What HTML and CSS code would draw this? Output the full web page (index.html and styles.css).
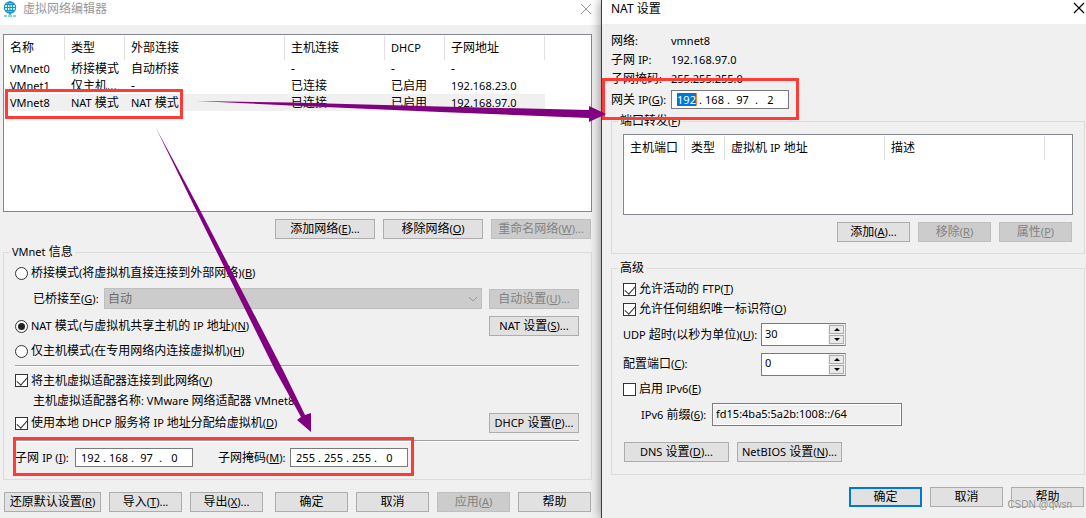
FILE: index.html
```html
<!DOCTYPE html>
<html lang="zh-CN">
<head>
<meta charset="utf-8">
<title>虚拟网络编辑器</title>
<link rel="stylesheet" href="styles.css">
</head>
<body>
<div class="desktop">
  <section class="window editor">
    <header class="titlebar inactive">
      <svg class="globe" viewBox="0 0 14 16" width="14" height="16" fill="none" stroke="#1496c8" stroke-width="1.2"><circle cx="7" cy="6.5" r="5.6"/><ellipse cx="7" cy="6.5" rx="2.6" ry="5.6"/><path d="M7 1v13M1.4 6.5h11.2M2.4 3.5h9.2M2.4 9.5h9.2"/><path d="M1 15h3M5 15h4M10 15h3" stroke="#0fb0a0"/></svg>
      <h1>虚拟网络编辑器</h1>
      <button class="close" aria-label="关闭"><svg viewBox="0 0 12 12" width="12" height="12"><path d="M1 1l10 10M11 1L1 11" stroke="currentColor" fill="none"/></svg></button>
    </header>
    <main class="editor-body">
      <div class="list networks">
        <table>
          <colgroup><col class="c60"><col class="c60"><col class="c160"><col class="c100"><col class="c60"><col class="c100"><col></colgroup>
          <thead><tr><th>名称</th><th>类型</th><th>外部连接</th><th>主机连接</th><th><span class="l">DHCP</span></th><th>子网地址</th><th></th></tr></thead>
          <tbody>
            <tr><td><span class="l">VMnet0</span></td><td>桥接模式</td><td>自动桥接</td><td>-</td><td>-</td><td>-</td><td></td></tr>
            <tr><td><span class="l">VMnet1</span></td><td>仅主机...</td><td>-</td><td>已连接</td><td>已启用</td><td><span class="l">192.168.23.0</span></td><td></td></tr>
            <tr class="selected"><td><span class="l">VMnet8</span></td><td><span class="l">NAT</span> 模式</td><td><span class="l">NAT</span> 模式</td><td>已连接</td><td>已启用</td><td><span class="l">192.168.97.0</span></td><td></td></tr>
          </tbody>
        </table>
      </div>
      <div class="actions network-actions">
        <button class="btn w100">添加网络<span class="l">(<u>E</u>)...</span></button>
        <button class="btn w100">移除网络<span class="l">(<u>O</u>)</span></button>
        <button class="btn w100" disabled>重命名网络<span class="l">(<u>W</u>)...</span></button>
      </div>
      <fieldset>
        <legend><span class="l">VMnet</span> 信息</legend>
        <div class="inner">
          <div class="row h26"><input type="radio" name="mode" id="bridge"><label for="bridge">桥接模式<span class="l">(</span>将虚拟机直接连接到外部网络<span class="l">)(<u>B</u>)</span></label></div>
          <div class="row h25 indent">
            <label for="adapter" class="adapter-label">已桥接至<span class="l">(<u>G</u>):</span></label>
            <div class="combo"><select id="adapter" disabled><option>自动</option></select><svg viewBox="0 0 10 6" width="10" height="6"><path d="M1 1l4 4 4-4" fill="none" stroke="#9a9a9a"/></svg></div>
            <button class="btn w90" disabled>自动设置<span class="l">(<u>U</u>)...</span></button>
          </div>
          <div class="row h30"><input type="radio" name="mode" id="nat" checked><label for="nat"><span class="l">NAT</span> 模式<span class="l">(</span>与虚拟机共享主机的 <span class="l">IP</span> 地址<span class="l">)(<u>N</u>)</span></label><button class="btn w90 end"><span class="l">NAT</span> 设置<span class="l">(<u>S</u>)...</span></button></div>
          <div class="row h20"><input type="radio" name="mode" id="host"><label for="host">仅主机模式<span class="l">(</span>在专用网络内连接虚拟机<span class="l">)(<u>H</u>)</span></label></div>
          <hr class="first">
          <div class="row h27"><input type="checkbox" id="connect" checked><label for="connect">将主机虚拟适配器连接到此网络<span class="l">(<u>V</u>)</span></label></div>
          <p class="adapter-name">主机虚拟适配器名称<span class="l">: VMware </span>网络适配器<span class="l"> VMnet8</span></p>
          <div class="row h32"><input type="checkbox" id="dhcp" checked><label for="dhcp">使用本地<span class="l"> DHCP </span>服务将<span class="l"> IP </span>地址分配给虚拟机<span class="l">(<u>D</u>)</span></label><button class="btn w90 end"><span class="l">DHCP</span> 设置<span class="l">(<u>P</u>)...</span></button></div>
          <hr>
          <div class="row h31">
            <label for="sub1" class="subnet-label">子网 <span class="l">IP (<u>I</u>):</span></label>
            <div class="ip"><input id="sub1" value="192"><i>.</i><input aria-label="子网 IP 2" value="168"><i>.</i><input aria-label="子网 IP 3" value="97"><i>.</i><input aria-label="子网 IP 4" value="0"></div>
            <label for="mask1" class="mask-label">子网掩码<span class="l">(<u>M</u>):</span></label>
            <div class="ip"><input id="mask1" value="255"><i>.</i><input aria-label="子网掩码 2" value="255"><i>.</i><input aria-label="子网掩码 3" value="255"><i>.</i><input aria-label="子网掩码 4" value="0"></div>
          </div>
        </div>
      </fieldset>
      <div class="actions footer">
        <button class="btn w97">还原默认设置<span class="l">(<u>R</u>)</span></button>
        <button class="btn w73">导入<span class="l">(<u>T</u>)...</span></button>
        <button class="btn w73">导出<span class="l">(<u>X</u>)...</span></button>
        <button class="btn w73 end">确定</button>
        <button class="btn w73">取消</button>
        <button class="btn w73" disabled>应用<span class="l">(<u>A</u>)</span></button>
        <button class="btn w73">帮助</button>
      </div>
    </main>
  </section>

  <section class="window nat">
    <header class="titlebar">
      <h1><span class="l12">NAT</span> 设置</h1>
      <button class="close" aria-label="关闭"><svg viewBox="0 0 12 12" width="12" height="12"><path d="M1 1l10 10M11 1L1 11" stroke="currentColor" stroke-width="1.2" fill="none"/></svg></button>
    </header>
    <main class="nat-body">
      <div class="row h19"><span class="key">网络<span class="l">:</span></span><span class="l">vmnet8</span></div>
      <div class="row h19"><span class="key">子网 <span class="l">IP:</span></span><span class="l">192.168.97.0</span></div>
      <div class="row h19"><span class="key">子网掩码<span class="l">:</span></span><span class="l">255.255.255.0</span></div>
      <div class="row h23"><label class="key" for="gw">网关 <span class="l">IP(<u>G</u>):</span></label>
        <div class="ip"><input id="gw" class="marked" value="192"><i>.</i><input aria-label="网关 IP 2" value="168"><i>.</i><input aria-label="网关 IP 3" value="97"><i>.</i><input aria-label="网关 IP 4" value="2"></div>
      </div>
      <fieldset class="forwarding">
        <legend>端口转发<span class="l">(<u>F</u>)</span></legend>
        <div class="inner">
          <div class="list ports">
            <table>
              <colgroup><col class="c60"><col class="c40"><col class="c160"><col class="c160"><col></colgroup>
              <thead><tr><th>主机端口</th><th>类型</th><th>虚拟机 <span class="l">IP</span> 地址</th><th>描述</th><th></th></tr></thead>
            </table>
          </div>
          <div class="actions port-actions">
            <button class="btn w73">添加<span class="l">(<u>A</u>)...</span></button>
            <button class="btn w73" disabled>移除<span class="l">(<u>R</u>)</span></button>
            <button class="btn w73" disabled>属性<span class="l">(<u>P</u>)</span></button>
          </div>
        </div>
      </fieldset>
      <fieldset class="advanced">
        <legend>高级</legend>
        <div class="inner">
          <div class="row h20"><input type="checkbox" id="ftp" checked><label for="ftp">允许活动的 <span class="l">FTP(<u>T</u>)</span></label></div>
          <div class="row h20"><input type="checkbox" id="oui" checked><label for="oui">允许任何组织唯一标识符<span class="l">(<u>O</u>)</span></label></div>
          <div class="row h31"><label class="wide-key" for="udp"><span class="l">UDP</span> 超时<span class="l">(</span>以秒为单位<span class="l">)(<u>U</u>):</span></label>
            <div class="spin"><input id="udp" value="30"><div class="steps"><button aria-label="增加"><svg viewBox="0 0 6 3" width="6" height="3"><path d="M0 3l3-3 3 3z"/></svg></button><button aria-label="减少"><svg viewBox="0 0 6 3" width="6" height="3"><path d="M0 0l3 3 3-3z"/></svg></button></div></div></div>
          <div class="row h28"><label class="wide-key" for="port">配置端口<span class="l">(<u>C</u>):</span></label>
            <div class="spin"><input id="port" value="0"><div class="steps"><button aria-label="增加"><svg viewBox="0 0 6 3" width="6" height="3"><path d="M0 3l3-3 3 3z"/></svg></button><button aria-label="减少"><svg viewBox="0 0 6 3" width="6" height="3"><path d="M0 0l3 3 3-3z"/></svg></button></div></div></div>
          <div class="row h22"><input type="checkbox" id="v6"><label for="v6">启用 <span class="l">IPv6(<u>E</u>)</span></label></div>
          <div class="row h29 indent"><label class="prefix-label" for="prefix"><span class="l">IPv6</span> 前缀<span class="l">(<u>6</u>):</span></label><input id="prefix" class="prefix" value="fd15:4ba5:5a2b:1008::/64" readonly></div>
          <div class="row h45 pair"><button class="btn w105"><span class="l">DNS</span> 设置<span class="l">(<u>D</u>)...</span></button><button class="btn w105"><span class="l">NetBIOS</span> 设置<span class="l">(<u>N</u>)...</span></button></div>
        </div>
      </fieldset>
      <div class="actions nat-footer">
        <button class="btn w73 default">确定</button>
        <button class="btn w73">取消</button>
        <button class="btn w73">帮助</button>
      </div>
    </main>
  </section>

  <svg class="marks" width="1086" height="518" viewBox="0 0 1086 518">
    <g fill="none" stroke="#ff3b38" stroke-width="3"><path d="M6.500 90.500H181.500V117.500H6.500zM14.500 438.500H412.500V474.500H14.500zM603.500 79.500H797.500V118.500H603.500z"/></g>
    <g fill="#800080"><path d="M196 101L290 102.500 440 106.500 589 110V106L606 114 589 122V118L440 112 290 105.500z"/><path d="M156 128L200 210 283 370 305 415 311 413V432L297 420 301 417 275 370 196 210z"/></g>
  </svg>
  <span class="watermark">CSDN @qwsn</span>
</div>
</body>
</html>
```
FILE: styles.css
```css
* { box-sizing: border-box; }
body {
  margin: 0;
  font-family: "Noto Sans", "Noto Sans CJK SC", sans-serif;
  font-size: 12px;
  line-height: 16px;
  color: #000;
  background: #f0f0f0;
}
button, input, select { font: inherit; color: inherit; margin: 0; }
h1, p { margin: 0; font-size: 12px; font-weight: 400; }
u { text-underline-offset: 1px; }
.l { font-size: 11px; }
.l12 { font-size: 12px; }

.desktop { position: relative; display: flex; min-height: 100vh; overflow: hidden; }
.window { background: #f0f0f0; min-width: 0; }
.editor { flex: 601 1 0; }
.nat { flex: 484 1 0; border-left: 1px solid #3c3c3c; box-shadow: -1px 0 10px rgba(0, 0, 0, .4); position: relative; }

.titlebar { display: flex; align-items: flex-start; height: 24px; padding: 1px 1px 0 9px; background: #fff; }
.titlebar.inactive { height: 25px; padding: 1px 9px 0 3px; color: #999; gap: 6px; }
.titlebar.inactive .close { padding-top: 2px; }
.close { margin-left: auto; padding: 1px 0 0; border: 0; background: none; line-height: 0; }

.editor-body { padding: 9px 9px 0 3px; }
.nat-body { padding: 7px 1px 0 9px; }

.list { background: #fff; border: 1px solid #828790; padding-top: 1px; }
.networks { height: 178px; }
.ports { height: 81px; margin-top: 5px; }
table { width: 100%; table-layout: fixed; border-collapse: separate; border-spacing: 0; }
th, td { padding: 0 0 0 6px; text-align: left; font-weight: 400; white-space: nowrap; overflow: hidden; }
th { height: 24px; border-right: 1px solid #e0e0e0; }
th:last-child { border-right: 0; }
td { height: 17px; line-height: 17px; }
.selected td:not(:last-child) { background: #f0f0f0; }
.c40 { width: 40px; }
.c60 { width: 60px; }
.c60:first-child { width: 61px; }
.c100 { width: 100px; }
.c160 { width: 160px; }

.actions { display: flex; gap: 8px; }
.network-actions { justify-content: flex-end; margin: 7px 1px 5px 0; }
.port-actions { justify-content: flex-end; margin: 7px 1px 11px 0; }
.footer { margin: 12px 1px 0; }
.nat-footer { justify-content: flex-end; margin: 12px 1px 0 0; }
.btn {
  flex: none;
  height: 20px;
  padding: 0;
  border: 1px solid #adadad;
  background: #e1e1e1;
  line-height: 16px;
  white-space: nowrap;
}
.btn:disabled { background: #ccc; border-color: #bfbfbf; color: #838383; }
.btn.default { border: 2px solid #0078d7; line-height: 14px; }
.w73 { width: 73px; }
.w90 { width: 90px; }
.w97 { width: 97px; }
.w100 { width: 100px; }
.w105 { width: 105px; }
.end { margin-left: auto; }

fieldset { margin: 0; padding: 0 11px 0 6px; border: 1px solid #dcdcdc; min-width: 0; }
.editor fieldset { padding: 0 12px 6px 6px; }
legend { padding: 0 2px; line-height: 16px; }
.inner { padding-left: 5px; }
.forwarding { margin-top: 2px; }
.advanced { margin-top: 6px; }
.advanced .inner { padding-top: 3px; }

.row { display: flex; align-items: center; white-space: nowrap; }
.indent { padding-left: 18px; }
.h19 { height: 19px; }
.h20 { height: 20px; }
.h22 { height: 22px; }
.h23 { height: 23px; }
.h25 { height: 25px; }
.h26 { height: 26px; }
.h27 { height: 27px; }
.h28 { height: 28px; }
.h29 { height: 29px; }
.h30 { height: 30px; }
.h31 { height: 31px; }
.h32 { height: 32px; }
.h45 { height: 45px; }
hr { height: 2px; margin: 1px 0 0; border: 0; border-top: 1px solid #a0a0a0; background: #fff; }
hr.first { margin-top: 4px; }
.adapter-name { padding-left: 18px; line-height: 13px; }

input[type="radio"], input[type="checkbox"] {
  appearance: none;
  flex: none;
  display: grid;
  place-items: center;
  width: 13px;
  height: 13px;
  margin-right: 3px;
  border: 1px solid #333;
  background: #fff;
}
input[type="radio"] { border-radius: 50%; }
input[type="radio"]:checked::before { content: ""; width: 7px; height: 7px; border-radius: 50%; background: #222; }
input[type="checkbox"]:checked::before {
  content: "";
  width: 5px;
  height: 9px;
  margin-bottom: 4px;
  border: solid #333;
  border-width: 0 1px 1px 0;
  transform: rotate(42deg);
}

.adapter-label { width: 71px; }
.combo { position: relative; flex: 1; margin-right: 7px; }
.combo select { display: block; appearance: none; width: 100%; height: 21px; padding: 0 3px; border: 1px solid #bfbfbf; border-radius: 0; background: #ccc; color: #6d6d6d; opacity: 1; }
.combo svg { position: absolute; right: 4px; top: 8px; }
.subnet-label { width: 60px; }
.mask-label { width: 72px; margin-left: 25px; }

.ip { display: flex; align-items: center; width: 118px; height: 19px; padding-left: 2px; border: 1px solid #7a7a7a; background: #fff; font-size: 11px; }
.ip input { width: 25px; height: 15px; padding: 0; border: 0; background: none; text-align: center; }
.ip i { width: 3px; font-style: normal; }
.ip .marked { width: 20px; height: 13px; margin: 0 2px 0 3px; background: #0078d7; color: #fff; border-right: 1px solid #ff8728; }

.key { width: 60px; }
.wide-key { width: 138px; }
.spin { display: flex; width: 85px; height: 23px; border: 1px solid #7a7a7a; border-right-color: #b4b4b4; background: #fff; }
.spin input { flex: 1; min-width: 0; height: 18px; padding: 0 3px; border: 0; background: none; font-size: 11px; }
.steps { display: grid; grid-template-rows: 1fr 1fr; gap: 1px; width: 17px; padding: 1px; background: #f0f0f0; }
.steps button { display: grid; place-items: center; padding: 0; border: 1px solid #adadad; background: #e9e9e9; }
.prefix-label { width: 71px; }
.prefix { width: 190px; height: 23px; padding: 0 3px 3px; border: 1px solid #7a7a7a; border-radius: 0; background: #f0f0f0; box-shadow: inset 0 0 0 1px #fff; font-size: 11px; }
.pair { gap: 8px; padding-left: 1px; }

.marks { position: absolute; left: 0; top: 0; pointer-events: none; }
.watermark { position: absolute; right: 14px; bottom: 7px; font-family: "Liberation Sans", sans-serif; font-size: 10px; line-height: 12px; color: #8c8c8c; text-shadow: 0 0 1px #fff; }
```
